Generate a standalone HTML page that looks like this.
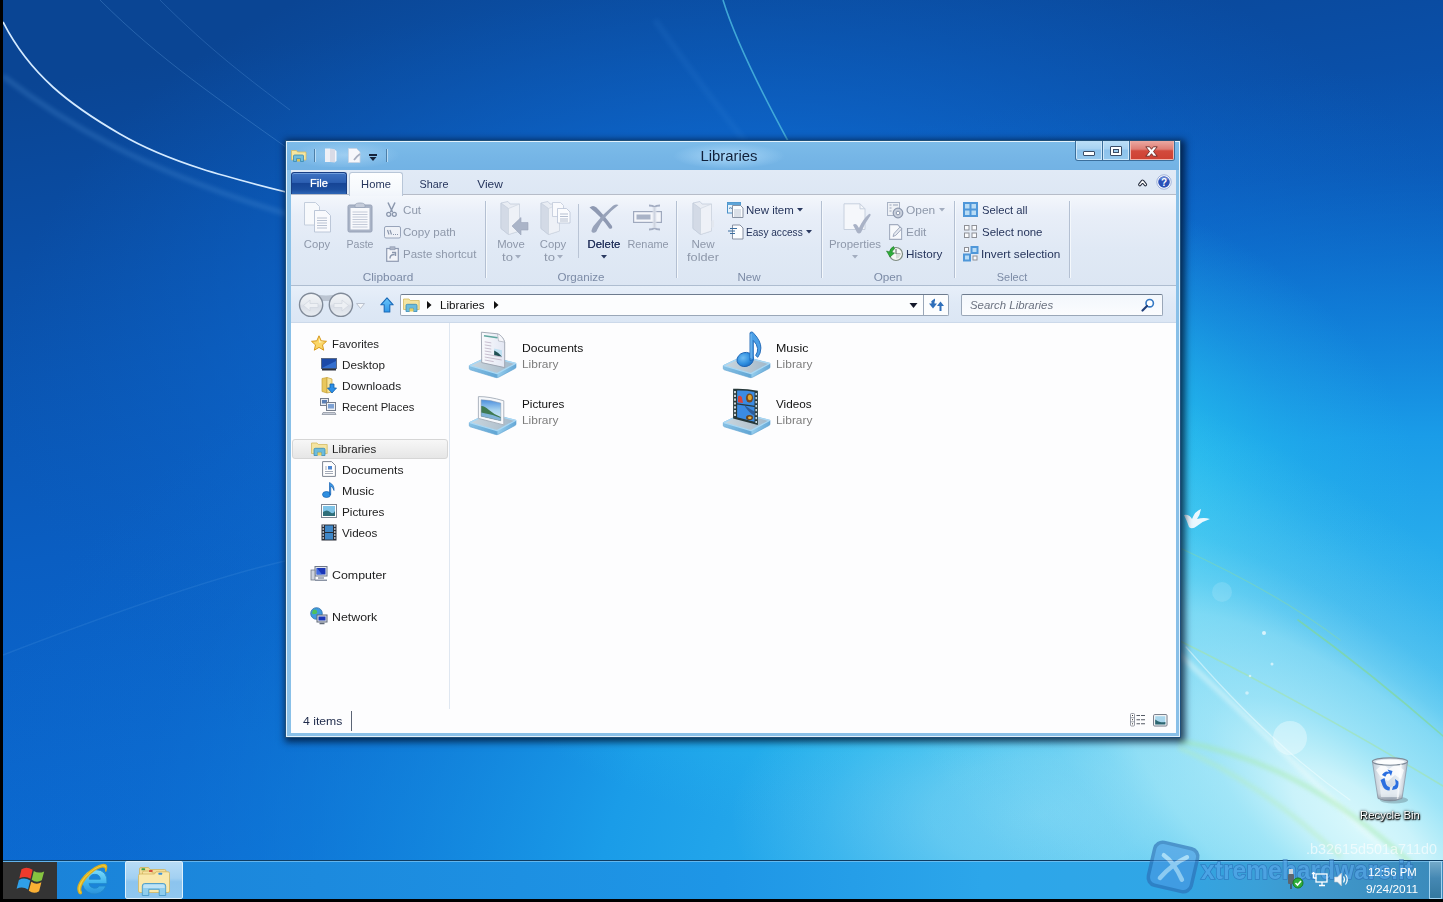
<!DOCTYPE html>
<html lang="en">
<head>
<meta charset="utf-8">
<title>Libraries</title>
<style>
*{box-sizing:border-box;margin:0;padding:0}
html,body{width:1443px;height:902px;overflow:hidden;background:#000}
body{position:relative;font-family:"Liberation Sans",sans-serif;font-size:12px;color:#1e1e1e}
.a{position:absolute}
svg{position:absolute;overflow:visible}
.t{position:absolute;white-space:nowrap;line-height:14.66px;font-size:11.6px;transform-origin:0 50%}
.c{text-align:center;transform-origin:50% 50%}
.dis{color:#8e98aa}
.en{color:#26355c}
.grp{color:#7c8ba6}
#desk{position:absolute;left:3px;top:0;width:1440px;height:899px;overflow:hidden;background:#0f5cb5}
</style>
</head>
<body>
<div id="desk">
<svg width="1440" height="899" viewBox="3 0 1440 899" style="left:0;top:0">
 <defs>
  <filter id="b2"><feGaussianBlur stdDeviation="2"/></filter>
  <filter id="b4"><feGaussianBlur stdDeviation="4"/></filter>
  <linearGradient id="wbase" gradientUnits="userSpaceOnUse" x1="560" y1="0" x2="700" y2="899">
   <stop offset="0" stop-color="#0a4594"/><stop offset=".15" stop-color="#0a4ca2"/><stop offset=".32" stop-color="#0a55b2"/>
   <stop offset=".52" stop-color="#0a5ec2"/><stop offset=".74" stop-color="#0b66cc"/><stop offset="1" stop-color="#0c6ed6"/>
  </linearGradient>
  <radialGradient id="wbroad" gradientUnits="userSpaceOnUse" cx="0" cy="0" r="1" gradientTransform="translate(1440 900) scale(1500 830)">
   <stop offset="0" stop-color="#4cc4f0"/><stop offset=".21" stop-color="#3cbaee"/><stop offset=".42" stop-color="#28acec"/>
   <stop offset=".56" stop-color="#1a9ce8"/><stop offset=".72" stop-color="#1286de" stop-opacity=".7"/><stop offset=".88" stop-color="#0e76d6" stop-opacity=".2"/><stop offset="1" stop-color="#0c6ed2" stop-opacity="0"/>
  </radialGradient>
  <radialGradient id="wcore" gradientUnits="userSpaceOnUse" cx="0" cy="0" r="1" gradientTransform="translate(1360 830) rotate(40) scale(700 270)">
   <stop offset="0" stop-color="#d8f8fc" stop-opacity="1"/><stop offset=".12" stop-color="#d0f5fb" stop-opacity=".96"/><stop offset=".18" stop-color="#c6f3fa" stop-opacity=".88"/><stop offset=".27" stop-color="#bcf1fa" stop-opacity=".74"/>
   <stop offset=".44" stop-color="#b8f0f9" stop-opacity=".58"/><stop offset=".52" stop-color="#b8f0f9" stop-opacity=".38"/><stop offset=".64" stop-color="#b4eef9" stop-opacity=".2"/><stop offset=".85" stop-color="#b0ecf8" stop-opacity=".06"/><stop offset="1" stop-color="#b0ecf8" stop-opacity="0"/>
  </radialGradient>
  <radialGradient id="wtr" gradientUnits="userSpaceOnUse" cx="0" cy="0" r="1" gradientTransform="translate(760 380) scale(760 480)">
   <stop offset="0" stop-color="#1278e0" stop-opacity="1"/><stop offset=".5" stop-color="#0e6cd4" stop-opacity=".7"/><stop offset=".8" stop-color="#0c64c8" stop-opacity=".3"/><stop offset="1" stop-color="#0c60c0" stop-opacity="0"/>
  </radialGradient>
  <radialGradient id="wg1" gradientUnits="userSpaceOnUse" cx="0" cy="0" r="1" gradientTransform="translate(900 500) scale(520 340)">
   <stop offset="0" stop-color="#38ccf2" stop-opacity="1"/><stop offset=".45" stop-color="#2cc8f0" stop-opacity=".85"/><stop offset=".6" stop-color="#28c8f0" stop-opacity=".6"/><stop offset=".8" stop-color="#28c0ee" stop-opacity=".25"/><stop offset="1" stop-color="#28b8ec" stop-opacity="0"/>
  </radialGradient>
  <radialGradient id="wg2" gradientUnits="userSpaceOnUse" cx="0" cy="0" r="1" gradientTransform="translate(1040 815) scale(310 160)">
   <stop offset="0" stop-color="#b8f0f9" stop-opacity=".46"/><stop offset=".35" stop-color="#b8f0f9" stop-opacity=".36"/><stop offset=".7" stop-color="#b4eef9" stop-opacity=".14"/><stop offset="1" stop-color="#b0ecf8" stop-opacity="0"/>
  </radialGradient>
 </defs>
 <rect x="3" y="0" width="1440" height="899" fill="url(#wbase)"/>
 <rect x="3" y="0" width="1440" height="899" fill="url(#wtr)"/>
 <rect x="3" y="0" width="1440" height="899" fill="url(#wbroad)"/>
 <rect x="3" y="0" width="1440" height="899" fill="url(#wg1)"/>
 <rect x="3" y="0" width="1440" height="899" fill="url(#wg2)"/>
 <rect x="3" y="0" width="1440" height="899" fill="url(#wcore)"/>
 <!-- faint wide arc top-left -->
 <path d="M3 76 C 60 120, 140 170, 290 215" fill="none" stroke="#5fa0e0" stroke-width="5" opacity=".25" filter="url(#b2)"/>
 <!-- white curve -->
 <path d="M3 22 C 30 75, 70 105, 120 134 S 230 178, 290 193" fill="none" stroke="#d4eaff" stroke-width="1.700"/>
 <!-- faint thin lines -->
 <path d="M100 0 C 160 60, 220 100, 290 150" fill="none" stroke="#6aa8e6" stroke-width="1" opacity=".3"/>
 <path d="M160 0 C 210 50, 250 80, 290 110" fill="none" stroke="#6aa8e6" stroke-width="1" opacity=".25"/>
 <!-- cyan thin curve top centre -->
 <path d="M723 0 C 734 36, 756 82, 788 141" fill="none" stroke="#4ab6de" stroke-width="1.600" opacity=".85"/>
 <path d="M655 20 C 690 70, 720 110, 745 141" fill="none" stroke="#3f8fe0" stroke-width="6" opacity=".12" filter="url(#b2)"/>
 <!-- light ray lower-left -->
 <path d="M3 655 C 120 610, 220 575, 290 560" fill="none" stroke="#4f98e0" stroke-width="1.500" opacity=".22"/>
 <!-- green swooshes bottom right -->
 <g fill="none" stroke-linecap="round">
  <path d="M1298 620 Q 1370 672, 1443 736" stroke="#86d888" stroke-width="1.600" opacity=".6"/>
  <path d="M1180 641 Q 1300 700, 1443 786" stroke="#a4e4a4" stroke-width="1.600" opacity=".55"/>
  <path d="M1180 655 C 1240 710, 1300 768, 1380 846" stroke="#effcfc" stroke-width="5" opacity=".5" filter="url(#b2)"/>
  <path d="M1186 647 C 1250 720, 1300 765, 1350 800" stroke="#f4ffff" stroke-width="1.200" opacity=".5"/>
  <path d="M1180 741 C 1260 756, 1330 790, 1410 862" stroke="#a6eaa6" stroke-width="4" opacity=".55" filter="url(#b2)"/>
  <path d="M1180 748 C 1240 774, 1295 814, 1340 856" stroke="#b6eeb2" stroke-width="4" opacity=".45" filter="url(#b2)"/>
  <path d="M1180 548 C 1250 580, 1300 610, 1340 640" stroke="#8fdc9a" stroke-width="1.300" opacity=".4"/>
 </g>
 <!-- bokeh -->
 <circle cx="1290" cy="738" r="17" fill="#f0fdff" opacity=".42"/>
 <circle cx="1222" cy="592" r="10" fill="#bfeefa" opacity=".22"/>
 <circle cx="1264" cy="633" r="2" fill="#fff" opacity=".7"/><circle cx="1272" cy="664" r="1.500" fill="#fff" opacity=".6"/><circle cx="1250" cy="676" r="1.300" fill="#fff" opacity=".6"/><circle cx="1247" cy="693" r="1.800" fill="#fff" opacity=".5"/>
 <!-- bird -->
 <path d="M1184 515 q5 -1 8 4 q3 -8 9 -10 q-1 6 -4 10 q7 -2 13 0 q-7 2 -13 7 q-5 4 -8 1 q-2 -6 -5 -12z" fill="#f4fbff" opacity=".95"/>
</svg>
</div>
<!-- window frame -->
<div class="a" style="left:285px;top:140px;width:896px;height:598px;box-shadow:2px 2px 7px 2px rgba(0,18,45,.78)"></div>
<div class="a" style="left:285px;top:140px;width:896px;height:598px;background:#89c0e8;border:1px solid #1f4f7a"></div>
<div class="a" style="left:286px;top:141px;width:894px;height:596px;border:1px solid #e3f2fc"></div>
<!-- title bar -->
<div class="a" style="left:287px;top:142px;width:892px;height:28px;background:linear-gradient(180deg,#7cbbe9 0%,#75b5e6 60%,#72b2e4 100%)"></div>
<div class="a" style="left:290px;top:143px;width:110px;height:24px;background:radial-gradient(ellipse 55px 14px at 50% 50%,rgba(190,225,250,.55),rgba(190,225,250,0))"></div>
<div class="a" style="left:669px;top:142px;width:120px;height:27px;background:radial-gradient(ellipse 56px 13px at 50% 52%,rgba(178,220,250,.85),rgba(170,215,248,.45) 55%,rgba(160,210,245,0) 100%)"></div>
<div class="t c" id="ttl" style="transform:scaleX(0.9908);left:629px;top:147px;width:200px;font-size:15px;line-height:18px;color:#10203a">Libraries</div>
<!-- quick access icons -->
<svg style="left:291px;top:148px" width="16" height="15" viewBox="0 0 16 15">
 <path d="M0.5 2.5h5l1 1.5h8.5v8h-14.5z" fill="#f6e6a0" stroke="#d6bd62" stroke-width=".8"/>
 <path d="M2.5 13.5v-5.5q0-1 1-1h8q1 0 1 1v5.5h-3v-3h-4v3z" fill="#72bedc" stroke="#3a8ab2" stroke-width=".8"/>
 <rect x="6" y="11" width="3" height="2.5" fill="#d9c45a"/>
</svg>
<div class="a" style="left:314px;top:149px;width:1px;height:13px;background:#4d7fa8"></div><div class="a" style="left:315px;top:149px;width:1px;height:13px;background:#b9dcf5"></div>
<svg style="left:324px;top:148px" width="14" height="15" viewBox="0 0 14 15"><path d="M1 0.5h5v13.5h-5z" fill="#eef0f6"/><path d="M6 0.5l5 .8v13.2l-5 -.5z" fill="#d9dbe6"/><path d="M11 2l1.5 1v10l-1.5 1z" fill="#f4f5fa"/></svg>
<svg style="left:348px;top:148px" width="13" height="15" viewBox="0 0 13 15"><path d="M.5 .5h8l3.5 3.5v10.500h-11.500z" fill="#f6f7fb" stroke="#c9d3e2" stroke-width=".8"/><path d="M6 12q3 -4 6 -6" stroke="#a8afc0" stroke-width="1.8" fill="none"/></svg>
<div class="a" style="left:369px;top:154px;width:8px;height:1.5px;background:#16243c"></div>
<svg style="left:369px;top:157px" width="8" height="5" viewBox="0 0 8 5"><path d="M.5 0h7l-3.500 4z" fill="#16243c"/></svg>
<div class="a" style="left:386px;top:149px;width:1px;height:13px;background:#4d7fa8"></div><div class="a" style="left:387px;top:149px;width:1px;height:13px;background:#b9dcf5"></div>
<!-- caption buttons -->
<div class="a" style="left:1075px;top:141px;width:100px;height:20px;background:#3b6f9c;border-radius:0 0 3px 3px"></div>
<div class="a" style="left:1076px;top:141px;width:26px;height:19px;border:1px solid #cfe8fa;border-top:none;background:linear-gradient(180deg,#bcdff7 0%,#a7d2f2 45%,#8dc2ec 50%,#94c8ee 100%);border-radius:0 0 0 2px"></div>
<div class="a" style="left:1103px;top:141px;width:26px;height:19px;border:1px solid #cfe8fa;border-top:none;background:linear-gradient(180deg,#bcdff7 0%,#a7d2f2 45%,#8dc2ec 50%,#94c8ee 100%)"></div>
<div class="a" style="left:1130px;top:141px;width:44px;height:19px;border:1px solid #f0b4ac;border-top:none;background:linear-gradient(180deg,#eaa9a2 0%,#df7d74 45%,#d24a3c 55%,#cf4233 100%);border-radius:0 0 2px 0"></div>
<div class="a" style="left:1083px;top:151px;width:12px;height:5px;background:#fff;border:1px solid #3a4c66;border-radius:1px"></div>
<div class="a" style="left:1110px;top:146px;width:12px;height:10px;background:#fff;border:1px solid #3a4c66;border-radius:1px"></div>
<div class="a" style="left:1113px;top:149px;width:6px;height:4px;background:#9fcdf0;border:1px solid #3a4c66"></div>
<svg style="left:1145px;top:145.500px" width="13" height="11" viewBox="0 0 13 11"><path d="M.8 .8h3.800l1.900 2.500 1.900 -2.500h3.800l-3.700 4.700 3.700 4.700h-3.800l-1.900 -2.500 -1.900 2.500h-3.800l3.700 -4.700z" fill="#fff" stroke="#6a2520" stroke-width=".9" stroke-linejoin="round"/></svg>
<!-- client bg -->
<div class="a" id="client" style="left:291px;top:170px;width:885px;height:563px;background:#fdfdfe"></div>
<!-- ribbon tab row -->
<div class="a" style="left:291px;top:170px;width:885px;height:25px;background:linear-gradient(180deg,#e1eaf6,#dde7f4)"></div>
<div class="a" style="left:291px;top:194px;width:885px;height:1px;background:#b6bcc8"></div>
<!-- ribbon body -->
<div class="a" style="left:291px;top:195px;width:885px;height:90px;background:linear-gradient(180deg,#f4f7fc 0%,#e8eef8 22%,#e0e9f5 60%,#dce6f3 100%)"></div>
<div class="a" style="left:291px;top:285px;width:885px;height:1px;background:#aebdd0"></div>
<!-- File tab -->
<div class="a" style="left:291px;top:172px;width:56px;height:22px;border:1px solid #1a3f84;border-bottom:none;border-radius:3px 3px 0 0;background:linear-gradient(180deg,#3f73c2 0%,#2c5fb2 45%,#164596 50%,#1c4f9f 80%,#2d66b6 100%);box-shadow:inset 0 1px 0 rgba(150,190,240,.6)"></div>
<div class="t c" style="transform:scaleX(0.9632);left:291px;top:175.500px;width:56px;color:#fff;text-shadow:0 0 1px #fff">File</div>
<!-- Home tab -->
<div class="a" style="left:349px;top:172px;width:54px;height:24px;border:1px solid #b8c6d8;border-bottom:none;border-radius:3px 3px 0 0;background:linear-gradient(180deg,#fdfeff 0%,#f6f9fd 70%,#f1f5fb 100%)"></div>
<div class="t c en" style="transform:scaleX(0.9632);left:349px;top:176.500px;width:54px">Home</div>
<div class="t c en" style="transform:scaleX(0.9309);left:408.500px;top:176.500px;width:50px">Share</div>
<div class="t c en" style="transform:scaleX(1.0312);left:464.600px;top:176.500px;width:50px">View</div>
<!-- collapse + help -->
<svg style="left:1137px;top:177px" width="12" height="10" viewBox="1137 177 12 10"><path d="M1139.800 184.600 L1142.600 181.200 L1145.400 184.600" fill="none" stroke="#252d3e" stroke-width="3.400" stroke-linejoin="round" stroke-linecap="round"/><path d="M1139.800 184.600 L1142.600 181.200 L1145.400 184.600" fill="none" stroke="#fff" stroke-width="1.400" stroke-linejoin="round" stroke-linecap="round"/></svg>
<svg style="left:1156px;top:174px" width="16" height="16" viewBox="0 0 16 16"><circle cx="8" cy="8" r="7.200" fill="#fff" stroke="#8aa0d0" stroke-width=".8"/><circle cx="8" cy="8" r="5.800" fill="#2a50b8"/><path d="M3 6a5.500 5.500 0 0 1 10 0q-5 -2 -10 0z" fill="#7f9be0" opacity=".7"/><text x="8" y="11.700" font-family="Liberation Sans, sans-serif" font-weight="bold" font-size="10" fill="#fff" text-anchor="middle">?</text></svg>

<!-- group separators -->
<div class="a" style="left:485px;top:201px;width:1px;height:77px;background:#b4c0d2"></div><div class="a" style="left:486px;top:201px;width:1px;height:77px;background:#f4f8fc"></div>
<div class="a" style="left:676px;top:201px;width:1px;height:77px;background:#b4c0d2"></div><div class="a" style="left:677px;top:201px;width:1px;height:77px;background:#f4f8fc"></div>
<div class="a" style="left:821px;top:201px;width:1px;height:77px;background:#b4c0d2"></div><div class="a" style="left:822px;top:201px;width:1px;height:77px;background:#f4f8fc"></div>
<div class="a" style="left:954px;top:201px;width:1px;height:77px;background:#b4c0d2"></div><div class="a" style="left:955px;top:201px;width:1px;height:77px;background:#f4f8fc"></div>
<div class="a" style="left:1069px;top:201px;width:1px;height:77px;background:#b4c0d2"></div><div class="a" style="left:1070px;top:201px;width:1px;height:77px;background:#f4f8fc"></div>
<div class="a" style="left:578px;top:204px;width:1px;height:54px;background:#b9c4d5"></div>

<!-- group labels -->
<div class="t c grp" style="transform:scaleX(1.0196);left:338.400px;top:270px;width:100px">Clipboard</div>
<div class="t c grp" style="transform:scaleX(1.0011);left:530.700px;top:270px;width:100px">Organize</div>
<div class="t c grp" style="transform:scaleX(0.9999);left:698.800px;top:270px;width:100px">New</div>
<div class="t c grp" style="transform:scaleX(1.0115);left:837.600px;top:270px;width:100px">Open</div>
<div class="t c grp" style="transform:scaleX(0.9431);left:962.100px;top:270px;width:100px">Select</div>

<!-- Clipboard group -->
<svg style="left:304px;top:202px" width="28" height="31" viewBox="0 0 28 31">
 <path d="M.5 .5h11l4 4v18.500h-15z" fill="#f7f9fc" stroke="#c4cedd"/>
 <path d="M10.500 8.500h11l5 5v16.500h-16z" fill="#f9fafd" stroke="#bcc7d8"/>
 <path d="M13 16h10M13 18.500h10M13 21h10M13 23.500h10M13 26h10" stroke="#b9c2d2" stroke-width="1"/>
</svg>
<div class="t c dis" style="transform:scaleX(0.9713);left:292.400px;top:237px;width:50px">Copy</div>
<svg style="left:347px;top:202px" width="26" height="31" viewBox="0 0 26 31">
 <rect x="1" y="3" width="24" height="27" rx="1.500" fill="#a9b3c6" stroke="#98a3b8"/>
 <rect x="3.500" y="6" width="19" height="21.500" fill="#f8f9fc"/>
 <path d="M8 3.500q0 -2.500 5 -2.500t5 2.500v2h-10z" fill="#c5ccda" stroke="#98a3b8" stroke-width=".8"/>
 <path d="M5.500 10h15M5.500 12.500h15M5.500 15h15M5.500 17.500h15M5.500 20h15M5.500 22.500h15M5.500 25h15" stroke="#c3cad8" stroke-width="1"/>
</svg>
<div class="t c dis" style="transform:scaleX(0.9104);left:334.600px;top:237px;width:50px">Paste</div>
<!-- cut -->
<svg style="left:386px;top:202px" width="11" height="16" viewBox="0 0 11 16"><path d="M2 .5l4.500 9.500M9 .5l-4.500 9.500" stroke="#8b97ad" stroke-width="1.500" fill="none"/><circle cx="2.700" cy="12.300" r="2" fill="none" stroke="#8b97ad" stroke-width="1.300"/><circle cx="8.300" cy="12.300" r="2" fill="none" stroke="#8b97ad" stroke-width="1.300"/></svg>
<div class="t dis" style="transform:scaleX(1.0029);left:403px;top:203px">Cut</div>
<svg style="left:384px;top:226px" width="17" height="13" viewBox="0 0 17 13"><rect x=".5" y=".5" width="16" height="11.500" rx="1.500" fill="#eef1f7" stroke="#98a4ba"/><path d="M3.500 4l1.500 4.500M6 4l1.500 4.500" stroke="#8b97ad" stroke-width="1.200"/><path d="M9 8.500h1M11 8.500h1M13 8.500h1" stroke="#8b97ad" stroke-width="1.200"/></svg>
<div class="t dis" style="transform:scaleX(0.9989);left:403px;top:225px">Copy path</div>
<svg style="left:386px;top:246px" width="13" height="16" viewBox="0 0 13 16"><rect x=".7" y="2.500" width="11.600" height="12.800" fill="#f3f5fa" stroke="#8f9bb2" stroke-width="1.200"/><rect x="4" y=".8" width="5" height="3" fill="#aeb7c8" stroke="#8f9bb2" stroke-width=".7"/><path d="M4 12.500q0 -4 4.500 -4M6 6.500h3.500v3.500" stroke="#8b97ad" stroke-width="1.400" fill="none"/></svg>
<div class="t dis" style="transform:scaleX(0.9904);left:403px;top:247px">Paste shortcut</div>

<!-- Organize group -->
<svg style="left:500px;top:201px" width="29" height="34" viewBox="0 0 29 34">
 <path d="M1 2l7 -1.500 2 2.500h9.500v27l-11 3.500l-7.500 -6z" fill="#e9edf4" stroke="#c3ccdb" stroke-width=".8"/>
 <path d="M1 2l7.500 5.500v26l-7.500 -6z" fill="#d3dae6" stroke="#c0c9d8" stroke-width=".6"/>
 <path d="M8.500 7.500l11 -4.500v27l-11 3.500z" fill="#eef1f7" stroke="#c9d1de" stroke-width=".6"/>
 <path d="M12 25l9 -8.500v5h7v7.500h-7v5z" fill="#aab4c8" stroke="#9aa5bb" stroke-width=".6"/>
</svg>
<div class="t c dis" style="transform:scaleX(0.9767);left:486.200px;top:237px;width:50px">Move</div>
<div class="t dis" style="transform:scaleX(1.1270);left:502px;top:250px">to</div>
<svg style="left:515px;top:255px" width="6" height="4" viewBox="0 0 6 4"><path d="M0 0h6l-3 3.500z" fill="#a3adbf"/></svg>
<svg style="left:540px;top:201px" width="31" height="34" viewBox="0 0 31 34">
 <path d="M1 2l7 -1.500 2 2.500h9.500v27l-11 3.500l-7.500 -6z" fill="#e9edf4" stroke="#c3ccdb" stroke-width=".8"/>
 <path d="M1 2l7.500 5.500v26l-7.500 -6z" fill="#d3dae6" stroke="#c0c9d8" stroke-width=".6"/>
 <path d="M8.500 7.500l11 -4.500v27l-11 3.500z" fill="#eef1f7" stroke="#c9d1de" stroke-width=".6"/>
 <path d="M12.500 1.500h8l3 3v11h-11z" fill="#f9fafd" stroke="#c0c9d9" stroke-width=".8"/>
 <path d="M17.500 7.500h9l3.500 3.500v11h-12.500z" fill="#fbfcfe" stroke="#b9c3d5" stroke-width=".8"/>
 <path d="M20 13h8M20 15.500h8M20 18h8M20 20h8" stroke="#b5bfd0" stroke-width="1"/>
</svg>
<div class="t c dis" style="transform:scaleX(0.9750);left:528.400px;top:237px;width:50px">Copy</div>
<div class="t dis" style="transform:scaleX(1.1270);left:543.800px;top:250px">to</div>
<svg style="left:557px;top:255px" width="6" height="4" viewBox="0 0 6 4"><path d="M0 0h6l-3 3.500z" fill="#a3adbf"/></svg>
<!-- delete -->
<svg style="left:589px;top:204px" width="30" height="29" viewBox="0 0 30 29">
 <path d="M.5 3.500q3.500 -3 7 0q7 7 15.500 18.500q1 3.500 -2.800 2.500q-8 -12 -19.700 -21z" fill="#8e99b2"/>
 <path d="M29.500 1q-2 -1.500 -5.500 .8q-11 9 -19.500 20.200q-3.500 5.500 -1 6.500q3.500 1 4.800 -3q6 -13 21.200 -24.500z" fill="#98a3ba"/>
</svg>
<div class="t c" style="transform:scaleX(0.9786);left:578.800px;top:237px;width:50px;color:#25345e;text-shadow:0 0 .6px #25345e">Delete</div>
<svg style="left:601px;top:255px" width="6" height="4" viewBox="0 0 6 4"><path d="M0 0h6l-3 3.500z" fill="#2a3960"/></svg>
<!-- rename -->
<svg style="left:633px;top:204px" width="30" height="27" viewBox="0 0 30 27">
 <rect x=".6" y="7.600" width="27.800" height="10.800" fill="#f4f6fa" stroke="#9fa9be" stroke-width="1.200"/>
 <rect x="3.500" y="10.500" width="14" height="5" fill="#a9b3c7"/>
 <path d="M16 1.500q4 0 5.500 1.500q1.500 -1.500 5.500 -1.500M16 25.500q4 0 5.500 -1.500q1.500 1.500 5.500 1.500M21.500 3v21" fill="none" stroke="#a3adc2" stroke-width="1.800"/>
 <rect x="19.500" y="3" width="4" height="21" fill="#dfe4ed" opacity=".7"/>
</svg>
<div class="t c dis" style="transform:scaleX(0.9400);left:622.500px;top:237px;width:50px">Rename</div>

<!-- New group -->
<svg style="left:692px;top:201px" width="23" height="34" viewBox="0 0 23 34">
 <path d="M1 2l7 -1.500 2 2.500h9.500v27l-11 3.500l-7.500 -6z" fill="#e9edf4" stroke="#c3ccdb" stroke-width=".8"/>
 <path d="M1 2l7.500 5.500v26l-7.500 -6z" fill="#d3dae6" stroke="#c0c9d8" stroke-width=".6"/>
 <path d="M8.500 7.500l11 -4.500v27l-11 3.500z" fill="#eef1f7" stroke="#c9d1de" stroke-width=".6"/>
 <path d="M19.500 20l2.500 -1v7l-2.500 1z" fill="#e3e8f0"/>
</svg>
<div class="t c dis" style="transform:scaleX(0.9999);left:677.600px;top:237px;width:50px">New</div>
<div class="t c dis" style="transform:scaleX(1.0960);left:677.500px;top:250px;width:50px">folder</div>
<svg style="left:727px;top:202px" width="17" height="16" viewBox="0 0 17 16">
 <rect x=".5" y=".5" width="13" height="10.500" fill="#e8f3fb" stroke="#4a90c8"/>
 <rect x=".5" y=".5" width="13" height="2.500" fill="#5fa5d8"/>
 <path d="M5.500 3.500h8l2.500 2.500v9.500h-10.500z" fill="#fcfdff" stroke="#7d8798" stroke-width=".9"/>
 <path d="M7 8h7M7 10h7M7 12h7M7 14h7" stroke="#b3bccb" stroke-width=".9"/>
 <path d="M2 6.500q1.500 -1.500 3 0" stroke="#4a7fb0" fill="none"/>
</svg>
<div class="t en" style="transform:scaleX(0.9891);left:746px;top:203px">New item</div>
<svg style="left:797px;top:208px" width="6" height="4" viewBox="0 0 6 4"><path d="M0 0h6l-3 3.500z" fill="#2a3960"/></svg>
<svg style="left:727px;top:224px" width="17" height="16" viewBox="0 0 17 16">
 <path d="M5.500 1h7.500l3 3v11h-10.500z" fill="#fcfdff" stroke="#7d8798" stroke-width=".9"/>
 <path d="M3 4.500h7M1 7h7M3 9.500h5" stroke="#3b6ea0" stroke-width="1.100"/>
</svg>
<div class="t en" style="transform:scaleX(0.8711);left:746px;top:225px">Easy access</div>
<svg style="left:806px;top:230px" width="6" height="4" viewBox="0 0 6 4"><path d="M0 0h6l-3 3.500z" fill="#2a3960"/></svg>

<!-- Open group -->
<svg style="left:843px;top:203px" width="28" height="31" viewBox="0 0 28 31">
 <path d="M1 .8h16l5 5v20.700h-21z" fill="#f5f7fb" stroke="#c7d0de"/>
 <path d="M17 .8v5h5" fill="none" stroke="#c7d0de"/>
 <path d="M10 22q2 -2 4 0l2 3q4 -9 10 -14q2 -1 1.500 1.500q-6 8 -9.500 17q-2 2 -4 0z" fill="#a9b2c6"/>
</svg>
<div class="t c dis" style="transform:scaleX(0.9878);left:820px;top:237px;width:70px">Properties</div>
<svg style="left:852px;top:255px" width="6" height="4" viewBox="0 0 6 4"><path d="M0 0h6l-3 3.500z" fill="#a3adbf"/></svg>
<svg style="left:887px;top:202px" width="17" height="17" viewBox="0 0 17 17">
 <rect x=".5" y=".5" width="12" height="13" fill="#eef1f6" stroke="#a9b3c5"/>
 <path d="M2.500 3h2M2.500 6h2M2.500 9h2M6 3h5" stroke="#9aa5b9" stroke-width="1.200"/>
 <circle cx="11" cy="11" r="4.800" fill="#c9d0dd" stroke="#8d98ae" stroke-width="1.200"/><circle cx="11" cy="11" r="1.800" fill="#fff" stroke="#8d98ae"/>
</svg>
<div class="t dis" style="transform:scaleX(1.0291);left:906px;top:203px">Open</div>
<svg style="left:939px;top:208px" width="6" height="4" viewBox="0 0 6 4"><path d="M0 0h6l-3 3.500z" fill="#a3adbf"/></svg>
<svg style="left:889px;top:224px" width="14" height="16" viewBox="0 0 14 16">
 <path d="M.6 .6h8l4 4v10.800h-12z" fill="#f7f9fc" stroke="#a3adc0" stroke-width="1.100"/>
 <path d="M4 12.500l1 -3l6 -6.500l1.800 1.800l-6 6.500z" fill="#e6eaf1" stroke="#97a2b7" stroke-width=".9"/>
</svg>
<div class="t dis" style="transform:scaleX(1.0208);left:906px;top:225px">Edit</div>
<svg style="left:886px;top:245px" width="18" height="17" viewBox="0 0 18 17">
 <circle cx="10" cy="9" r="6.500" fill="#f6f7f5" stroke="#7d8a80" stroke-width="1.200"/>
 <path d="M10 9v-5M10 9h4.500" stroke="#6a746e" stroke-width="1.100"/>
 <path d="M10 9l4.500 0a4.500 4.500 0 0 1 -4.500 4.500z" fill="#d8dcd9"/>
 <path d="M7.500 1.500a7.500 7.500 0 0 0 -4 5.500l-3 -1l3.500 6l4.500 -4l-2.600 -.5a5 5 0 0 1 2.600 -3.500z" fill="#2fae3a" stroke="#1d7a25" stroke-width=".6"/>
</svg>
<div class="t en" style="transform:scaleX(1.0089);left:906px;top:247px">History</div>

<!-- Select group -->
<svg style="left:963px;top:202px" width="16" height="16" viewBox="0 0 16 16">
 <rect width="15" height="15" fill="#4f97d9"/>
 <rect x="2" y="2" width="4.500" height="4.500" fill="#b9dcf5"/><rect x="8.500" y="2" width="4.500" height="4.500" fill="#b9dcf5"/><rect x="2" y="8.500" width="4.500" height="4.500" fill="#b9dcf5"/><rect x="8.500" y="8.500" width="4.500" height="4.500" fill="#b9dcf5"/>
</svg>
<div class="t en" style="transform:scaleX(0.9671);left:982px;top:203px">Select all</div>
<svg style="left:964px;top:225px" width="14" height="14" viewBox="0 0 14 14" fill="#fafbfd" stroke="#8d8f96" stroke-width="1"><rect x=".5" y=".5" width="4.500" height="4.500"/><rect x="8" y=".5" width="4.500" height="4.500"/><rect x=".5" y="8" width="4.500" height="4.500"/><rect x="8" y="8" width="4.500" height="4.500"/></svg>
<div class="t en" style="transform:scaleX(0.9878);left:982px;top:225px">Select none</div>
<svg style="left:963px;top:246px" width="16" height="16" viewBox="0 0 16 16">
 <rect x="1.500" y="1.500" width="4" height="4" fill="#fafbfd" stroke="#8d8f96"/>
 <rect x="7.500" y="0" width="8" height="8" fill="#4f97d9"/><rect x="9.500" y="2" width="4" height="4" fill="#b9dcf5"/>
 <rect x="0" y="7.500" width="8" height="8" fill="#4f97d9"/><rect x="2" y="9.500" width="4" height="4" fill="#b9dcf5"/>
 <rect x="10" y="10" width="4" height="4" fill="#fafbfd" stroke="#8d8f96"/>
</svg>
<div class="t en" style="transform:scaleX(1.0169);left:981px;top:247px">Invert selection</div>
<!-- nav bar -->
<div class="a" style="left:291px;top:286px;width:885px;height:37px;background:linear-gradient(180deg,#e7eff9 0%,#dfe9f6 50%,#dbe6f4 100%)"></div>
<div class="a" style="left:291px;top:322px;width:885px;height:1px;background:#ccd9ea"></div>
<!-- back/forward -->
<svg style="left:297px;top:291px" width="70" height="28" viewBox="0 0 70 28">
 <defs><linearGradient id="bg1" x1="0" y1="0" x2="0" y2="1"><stop offset="0" stop-color="#f3f5f8"/><stop offset=".45" stop-color="#e6eaef"/><stop offset=".55" stop-color="#d9dee6"/><stop offset="1" stop-color="#e9edf2"/></linearGradient></defs>
 <path d="M14 2 Q 29 7 44 2 L44 11 Q29 9 14 11z" fill="#b4bdca" opacity=".85"/>
 <circle cx="14.100" cy="13.800" r="11.600" fill="url(#bg1)" stroke="#808a98" stroke-width="1.400"/>
 <circle cx="43.900" cy="13.800" r="11.600" fill="url(#bg1)" stroke="#808a98" stroke-width="1.400"/>
 <path d="M6.500 14.500l6.500 -5.500v3.500h8v4h-8v3.500z" fill="#edf0f4" stroke="#d2d7df" stroke-width=".8"/>
 <path d="M51.500 14.500l-6.500 -5.500v3.500h-8v4h8v3.500z" fill="#edf0f4" stroke="#d2d7df" stroke-width=".8"/>
 <path d="M59.500 12.500h8l-4 5z" fill="#f5f7fa" stroke="#b4bcc9" stroke-width=".9"/>
</svg>
<!-- up arrow -->
<svg style="left:380px;top:297px" width="14" height="16" viewBox="0 0 14 16"><defs><linearGradient id="upg" x1="0" y1="0" x2="0" y2="1"><stop offset="0" stop-color="#6cc6fa"/><stop offset="1" stop-color="#2f98ea"/></linearGradient></defs><path d="M7 .8l6.200 7h-3.400v7.200h-5.600v-7.200h-3.400z" fill="url(#upg)" stroke="#1a6ab8" stroke-width="1.100" stroke-linejoin="round"/></svg>
<!-- address bar -->
<div class="a" style="left:400px;top:294px;width:549px;height:22px;background:#fcfdfe;border:1px solid #9aa7b8;border-top-color:#6d7b8e;border-radius:2px"></div>
<div class="a" style="left:923px;top:295px;width:1px;height:20px;background:#9aa7b8"></div>
<svg style="left:403px;top:297px" width="17" height="16" viewBox="0 0 17 16">
 <path d="M.5 2h5.500l1.200 1.500h9v9h-15.700z" fill="#f5e4a0" stroke="#d4bb62" stroke-width=".8"/>
 <path d="M3 14.500v-6q0 -1.200 1.200 -1.200h8.600q1.200 0 1.200 1.200v6h-3.500v-3.200h-4v3.200z" fill="#6cbcdc" stroke="#3a8cb6" stroke-width=".8"/>
 <rect x="6.500" y="11.500" width="4" height="3" fill="#e5cf62"/>
</svg>
<svg style="left:427px;top:301px" width="5" height="8" viewBox="0 0 5 8"><path d="M0 0l4.500 4l-4.500 4z" fill="#111"/></svg>
<div class="t" style="transform:scaleX(1.0030);left:440px;top:298px;color:#111">Libraries</div>
<svg style="left:494px;top:301px" width="5" height="8" viewBox="0 0 5 8"><path d="M0 0l4.500 4l-4.500 4z" fill="#111"/></svg>
<svg style="left:909px;top:303px" width="9" height="5" viewBox="0 0 9 5"><path d="M.5 0h8l-4 5z" fill="#14182a"/></svg>
<svg style="left:929px;top:298px" width="15" height="14" viewBox="0 0 15 14">
 <path d="M5.500 1v4.500h2.500l-4 5l-4 -5h2.500v-2z" fill="#2f6fba" transform="translate(0,0) rotate(0)"/>
 <path d="M10.500 13v-5h-2.500l3.500 -4.500l3.500 4.500h-2.500v5z" fill="#2f6fba"/>
 <path d="M2 3.500l4 -3v2.200l-1.500 1.800z" fill="#2f6fba"/>
</svg>
<!-- search -->
<div class="a" style="left:961px;top:294px;width:202px;height:22px;background:linear-gradient(180deg,#f3f7fc,#fbfcfe);border:1px solid #9aa7b8;border-top-color:#6d7b8e;border-radius:2px"></div>
<div class="t" style="transform:scaleX(0.9843);left:970px;top:298px;color:#6b7280;font-style:italic">Search Libraries</div>
<svg style="left:1141px;top:298px" width="14" height="14" viewBox="0 0 14 14"><circle cx="8.700" cy="5.200" r="3.700" fill="#fff" stroke="#3579c4" stroke-width="1.600"/><path d="M6 8l-4.500 4.500" stroke="#1f3e78" stroke-width="2.200" stroke-linecap="round"/></svg>
<!-- content -->
<div class="a" style="left:449px;top:323px;width:1px;height:386px;background:#dfe7f1"></div>
<!-- sidebar -->
<div class="a" style="left:292px;top:439px;width:156px;height:20px;border:1px solid #d6d6d6;border-radius:3px;background:linear-gradient(180deg,#f7f7f7,#e6e6e6)"></div>
<div class="t" style="transform:scaleX(0.9856);left:332px;top:336.500px">Favorites</div>
<div class="t" style="transform:scaleX(1.0087);left:342px;top:357.500px">Desktop</div>
<div class="t" style="transform:scaleX(1.0321);left:342px;top:378.500px">Downloads</div>
<div class="t" style="transform:scaleX(0.9670);left:342px;top:399.500px">Recent Places</div>
<div class="t" style="transform:scaleX(0.9940);left:332px;top:442px">Libraries</div>
<div class="t" style="transform:scaleX(1.0505);left:342px;top:463px">Documents</div>
<div class="t" style="transform:scaleX(1.0667);left:342px;top:483.500px">Music</div>
<div class="t" style="transform:scaleX(1.0145);left:342px;top:504.500px">Pictures</div>
<div class="t" style="transform:scaleX(1.0043);left:342px;top:525.500px">Videos</div>
<div class="t" style="transform:scaleX(1.0686);left:332px;top:568px">Computer</div>
<div class="t" style="transform:scaleX(1.0651);left:332px;top:610px">Network</div>
<!-- sidebar icons -->
<svg style="left:311px;top:335px" width="16" height="16" viewBox="0 0 16 16"><path d="M8 .8l2.200 5 5.300 .5 -4 3.600 1.200 5.300 -4.700 -2.800 -4.700 2.800 1.200 -5.300 -4 -3.600 5.300 -.5z" fill="#fbd768" stroke="#d89a1e" stroke-width="1"/><path d="M8 3l1.400 3.400 3.400 .3 -4.800 1z" fill="#fff3c0"/></svg>
<svg style="left:321px;top:357px" width="16" height="15" viewBox="0 0 16 15"><rect x=".5" y="1.500" width="15" height="10" fill="#1c4aa8" stroke="#5a6a86"/><path d="M1 11l14 -7v7.500h-14z" fill="#3f7fe0" opacity=".7"/><rect x="1" y="11.500" width="14" height="2" fill="#2a2f3a"/></svg>
<svg style="left:321px;top:377px" width="17" height="17" viewBox="0 0 17 17"><path d="M1 1.500l5 -1v15.500l-5 -1.500z" fill="#e9c75c" stroke="#c7a23a" stroke-width=".7"/><path d="M6 .5l5 1.500v13l-5 1z" fill="#f6e39a" stroke="#c7a23a" stroke-width=".7"/><path d="M9 7h4v4h2.500l-4.500 5l-4.500 -5h2.500z" fill="#2b8fe8" stroke="#155fa8" stroke-width=".8"/></svg>
<svg style="left:320px;top:398px" width="17" height="17" viewBox="0 0 17 17"><rect x=".5" y=".5" width="8" height="7" fill="#e7eaf0" stroke="#767e8c"/><rect x="2" y="2" width="5" height="3.500" fill="#5b7fb4"/><rect x="6.500" y="4.500" width="9" height="8" fill="#eef0f4" stroke="#767e8c"/><rect x="8" y="6" width="6" height="4.500" fill="#7ea2d4"/><path d="M3 14.500h12l1 2h-14z" fill="#c9ced8" stroke="#848c9a" stroke-width=".7"/></svg>
<svg style="left:311px;top:441px" width="17" height="16" viewBox="0 0 17 16"><path d="M.5 2h5.500l1.200 1.500h9v9h-15.700z" fill="#f5e4a0" stroke="#d4bb62" stroke-width=".8"/><path d="M3 14.500v-6q0 -1.200 1.200 -1.200h8.600q1.200 0 1.200 1.200v6h-3.500v-3.200h-4v3.200z" fill="#6cbcdc" stroke="#3a8cb6" stroke-width=".8"/><rect x="6.500" y="11.500" width="4" height="3" fill="#e5cf62"/></svg>
<svg style="left:322px;top:461px" width="14" height="16" viewBox="0 0 14 16"><path d="M.6 .6h9l3.800 3.800v11h-12.800z" fill="#fff" stroke="#7d8592" stroke-width="1"/><rect x="6" y="5" width="4" height="3.500" fill="#4f86d0"/><path d="M3 6h2M3 8h2M3 10.500h8M3 12.500h8" stroke="#9aa2b0" stroke-width=".9"/></svg>
<svg style="left:322px;top:482px" width="14" height="16" viewBox="0 0 14 16"><ellipse cx="4.500" cy="12.500" rx="4" ry="3" fill="#2f8fe0" stroke="#1660b0" stroke-width=".7"/><path d="M7.500 12.500v-12q5 2.500 4.500 8q-1 -3.500 -3.300 -4.500v8.500z" fill="#3c98e6" stroke="#1660b0" stroke-width=".7"/></svg>
<svg style="left:321px;top:504px" width="16" height="14" viewBox="0 0 16 14"><rect x=".5" y=".5" width="15" height="13" fill="#fff" stroke="#7d8592"/><rect x="2" y="2" width="12" height="10" fill="#7fc4e8"/><path d="M2 12v-4q4 -3 7 0t5 -1v5z" fill="#2f6f7a"/></svg>
<svg style="left:321px;top:524px" width="16" height="17" viewBox="0 0 16 17"><rect x=".5" y=".5" width="15" height="16" fill="#2b2f38"/><rect x="4" y="1.500" width="8" height="6.500" fill="#3f87c8"/><rect x="4" y="9" width="8" height="6.500" fill="#3f87c8"/><path d="M1.500 2h1.500M1.500 5h1.500M1.500 8h1.500M1.500 11h1.500M1.500 14h1.500M13 2h1.500M13 5h1.500M13 8h1.500M13 11h1.500M13 14h1.500" stroke="#d8dce4" stroke-width="1.500"/></svg>
<svg style="left:310px;top:566px" width="18" height="16" viewBox="0 0 18 16"><rect x="5" y=".5" width="12" height="9.500" fill="#e3e7ee" stroke="#6f7888"/><rect x="6.500" y="2" width="9" height="6.500" fill="#1a36b8"/><path d="M7 2l5 6.500h-5.500z" fill="#4b7bec" opacity=".8"/><rect x="8" y="11" width="6" height="2" fill="#aab1bf"/><rect x="1" y="4" width="4" height="10" fill="#cfd4de" stroke="#6f7888" stroke-width=".8"/><path d="M5 13.500h12v1.500h-12z" fill="#8a93a4"/></svg>
<svg style="left:310px;top:607px" width="18" height="18" viewBox="0 0 18 18"><circle cx="6.500" cy="6.500" r="5.800" fill="#3f9be0" stroke="#2a6aa8" stroke-width=".8"/><path d="M3 3q3 -1.500 4 1t-2 3t-3 -1zM8 8q3 -1 3 1.500t-2.500 1.500z" fill="#4fc05a"/><rect x="7" y="8" width="10" height="7" fill="#dfe3ea" stroke="#5f6878"/><rect x="8.500" y="9.500" width="7" height="4" fill="#1a36b8"/><path d="M9.500 16.500h5" stroke="#5f6878" stroke-width="1.500"/></svg>

<!-- library items -->
<div class="t" style="transform:scaleX(1.0454);left:522px;top:340.500px;color:#111">Documents</div>
<div class="t" style="transform:scaleX(1.0267);left:522px;top:356.500px;color:#7d7d7d">Library</div>
<div class="t" style="transform:scaleX(1.0098);left:522px;top:396.500px;color:#111">Pictures</div>
<div class="t" style="transform:scaleX(1.0267);left:522px;top:412.500px;color:#7d7d7d">Library</div>
<div class="t" style="transform:scaleX(1.0700);left:776px;top:340.500px;color:#111">Music</div>
<div class="t" style="transform:scaleX(1.0267);left:776px;top:356.500px;color:#7d7d7d">Library</div>
<div class="t" style="transform:scaleX(1.0099);left:776px;top:396.500px;color:#111">Videos</div>
<div class="t" style="transform:scaleX(1.0267);left:776px;top:412.500px;color:#7d7d7d">Library</div>

<svg width="0" height="0" style="left:0;top:0"><defs>
 <linearGradient id="plt" x1="0" y1="0" x2="1" y2="0"><stop offset="0" stop-color="#c9d6df"/><stop offset=".55" stop-color="#b7c6d1"/><stop offset="1" stop-color="#9fb7ca"/></linearGradient>
 <linearGradient id="pls" x1="0" y1="0" x2="1" y2="0"><stop offset="0" stop-color="#86c0e4"/><stop offset=".58" stop-color="#62a6d4"/><stop offset=".62" stop-color="#92cbec"/><stop offset="1" stop-color="#66a8d6"/></linearGradient>
 <g id="plate">
  <path d="M.3 34.600 L20 25.300 L47 32.400 L47 36 Q47 37 46 37.500 L29.500 46.300 Q28 47 26.500 46.500 L1.300 38.800 Q.3 38.400 .3 37.400z" fill="url(#pls)" stroke="#5a9fd0" stroke-width=".6"/>
  <path d="M.8 34.600 L20 25.600 L46.600 32.500 L28 42.600z" fill="url(#plt)" stroke="#a9d8f4" stroke-width="1.300" stroke-linejoin="round"/>
 </g>
 <linearGradient id="pg" x1="0" y1="0" x2="1" y2="0"><stop offset="0" stop-color="#f9fafd"/><stop offset="1" stop-color="#e3e7f3"/></linearGradient>
 <linearGradient id="sky" x1="0" y1="0" x2="0" y2="1"><stop offset="0" stop-color="#4a8ede"/><stop offset=".5" stop-color="#a9d4f0"/><stop offset="1" stop-color="#d8eef8"/></linearGradient>
 <radialGradient id="nh" cx=".4" cy=".35" r=".7"><stop offset="0" stop-color="#6fbcf2"/><stop offset=".6" stop-color="#2f8fe0"/><stop offset="1" stop-color="#1a6cc0"/></radialGradient>
</defs></svg>
<!-- documents -->
<svg style="left:469px;top:331px" width="48" height="48" viewBox="0 0 48 48">
 <use href="#plate"/>
 <path d="M12.400 1.200 L28.500 2.800 Q33.500 4.500 35.700 11.100 L35.700 36.600 L12.700 31.600z" fill="url(#pg)" stroke="#9aa2ae" stroke-width=".9" stroke-linejoin="round"/>
 <path d="M28.500 2.800 L29.500 10 L35.700 11.100 Q33.500 4.500 28.500 2.800z" fill="#f6f7fb" stroke="#a7aeb9" stroke-width=".7"/>
 <path d="M15 4.700 L28.500 6.800" stroke="#5fa69e" stroke-width="1.600"/>
 <path d="M25.200 17.600 L33 19.200 L33 25.800 L25.200 24.200z" fill="#bfe0f2"/>
 <path d="M25.200 19.500 Q29 21 33 25.800 L25.200 24.200z" fill="#1f4f52"/>
 <path d="M15.700 10.800l6.600 1.100M15.700 13.900l6.600 1.100M15.700 17l6.600 1.100M15.700 20l6.600 1.100M15.700 23l17 3M15.700 26l17 3M15.700 29l9 1.600" stroke="#b7a9bd" stroke-width=".9" opacity=".8"/>
</svg>
<!-- pictures -->
<svg style="left:469px;top:387.500px" width="48" height="48" viewBox="0 0 48 48">
 <use href="#plate"/>
 <path d="M9.400 8.600 Q20 8.400 34.800 12.800 L34.800 36.900 L9.400 30.400z" fill="#f7f9fc" stroke="#a4adb8" stroke-width=".9" stroke-linejoin="round"/>
 <path d="M12.100 11.700 Q21 11.700 31.800 15.100 L31.800 32.800 L12.100 28.200z" fill="url(#sky)"/>
 <path d="M12.100 18 Q15 17.500 20 22 T31.800 29 L31.800 32.800 L12.100 28.200z" fill="#3f7a52"/>
 <path d="M12.100 24.500 Q22 26 31.800 30 L31.800 32.800 L12.100 28.200z" fill="#7fb3d8"/>
 <path d="M12.100 11.700 Q21 11.700 31.800 15.100 L31.800 32.800 L12.100 28.200z" fill="none" stroke="#8d98a6" stroke-width=".5"/>
</svg>
<!-- music -->
<svg style="left:723px;top:331px" width="48" height="48" viewBox="0 0 48 48">
 <use href="#plate"/>
 <ellipse cx="22.200" cy="28.500" rx="8.300" ry="7" fill="url(#nh)" stroke="#1c64b4" stroke-width=".9" transform="rotate(-15 22.200 28.500)"/>
 <path d="M27 29.500 V2.200 Q27 1 28.600 1 Q30 1 30.600 2.200 Q38 10 37.900 17 Q37.800 22.500 34.800 26.300 L32.600 24.400 Q35 21 34.600 17.500 Q34 13 30.300 9.500 V28.500z" fill="#4b9fe6" stroke="#1c64b4" stroke-width=".9" stroke-linejoin="round"/>
 <path d="M28 3 V27" stroke="#8cc8f4" stroke-width="1" opacity=".8"/>
</svg>
<!-- videos -->
<svg style="left:723px;top:387.500px" width="48" height="48" viewBox="0 0 48 48">
 <use href="#plate"/>
 <path d="M10.100 .8 Q22 .2 34.900 2.700 L34.900 36.900 L10.100 30.400z" fill="#27383a"/>
 <path d="M14.100 2.600 Q23 2.300 31.500 4 L31.500 17.700 L14.100 15.200z" fill="#3b8be2"/>
 <path d="M14.100 16.400 L31.500 19 L31.500 33.800 L14.100 29.300z" fill="#3b8be2"/>
 <path d="M15 8.500 q2.500 -2 4 1 l1 5.500 l-5 -.7z" fill="#d8423a"/>
 <ellipse cx="26.500" cy="10" rx="3.600" ry="4.600" fill="#7a4a1e"/><ellipse cx="26.800" cy="9.500" rx="2" ry="2.800" fill="#e2a62c"/>
 <path d="M22 17.500 q4 3 9.500 6 v4 q-5 -2 -9.500 -9z" fill="#2a4a7a" opacity=".7"/>
 <ellipse cx="26.500" cy="29.500" rx="3.500" ry="2.600" fill="#6a431c"/><ellipse cx="26.800" cy="29.800" rx="1.800" ry="1.300" fill="#e8b84a"/>
 <path d="M12 3v2.200M12 6.800v2.200M12 10.600v2.200M12 14.400v2.200M12 18.200v2.200M12 22v2.200M12 25.800v2.200" stroke="#e6ecef" stroke-width="1.700"/>
 <path d="M33.200 5v2.200M33.200 9v2.200M33.200 13v2.200M33.200 17v2.200M33.200 21v2.200M33.200 25v2.200M33.200 29v2.200M33.200 33v2" stroke="#cfe0ea" stroke-width="1.500"/>
</svg>

<!-- status bar -->
<div class="t" style="transform:scaleX(1.0515);left:302.500px;top:713.500px;color:#1e2a4a">4 items</div>
<div class="a" style="left:351px;top:711px;width:1px;height:20px;background:#5b6475"></div>
<svg style="left:1130px;top:713px" width="16" height="14" viewBox="0 0 16 14">
 <rect x=".5" y=".5" width="4" height="12.500" fill="#fff" stroke="#8a8f9a" stroke-width=".9" rx="1"/>
 <path d="M.5 4.700h4M.5 8.800h4" stroke="#8a8f9a" stroke-width=".8"/>
 <rect x="2" y="2" width="1" height="1" fill="#333"/><rect x="2" y="6.200" width="1" height="1" fill="#333"/><rect x="2" y="10.300" width="1" height="1" fill="#333"/>
 <path d="M6.500 2.500h3.500M11 2.500h4M6.500 6.700h3.500M11 6.700h4M6.500 10.800h3.500M11 10.800h4" stroke="#555b66" stroke-width="1.100"/>
</svg>
<svg style="left:1153px;top:714px" width="15" height="13" viewBox="0 0 15 13">
 <rect x=".6" y=".6" width="13.400" height="11.400" fill="#fff" stroke="#6f7683" stroke-width="1" rx="1"/>
 <rect x="2.200" y="2.200" width="10.200" height="8.200" fill="#a9d6ec"/>
 <path d="M2.200 10.400v-5q3 2 5 2.500t5.200 0v2.500z" fill="#2e6670"/>
</svg>
<!-- desktop icon + watermark -->
<svg style="left:1366px;top:755px" width="48" height="52" viewBox="1366 755 48 52">
 <defs>
  <linearGradient id="rb1" x1="0" y1="0" x2="1" y2="0"><stop offset="0" stop-color="#b9c6d2"/><stop offset=".25" stop-color="#eef3f8"/><stop offset=".55" stop-color="#dbe4ee"/><stop offset=".8" stop-color="#f2f6fa"/><stop offset="1" stop-color="#aab6c4"/></linearGradient>
  <linearGradient id="rb2" x1="0" y1="0" x2="0" y2="1"><stop offset="0" stop-color="#fff" stop-opacity="0"/><stop offset=".8" stop-color="#8a96a4" stop-opacity=".25"/><stop offset="1" stop-color="#5f6a78" stop-opacity=".7"/></linearGradient>
 </defs>
 <ellipse cx="1394" cy="800" rx="14" ry="3.500" fill="#41525e" opacity=".3"/>
 <path d="M1372.500 762 L1378 798.500 Q1390 803.500 1402 798.500 L1407.500 762z" fill="url(#rb1)" stroke="#8b98a6" stroke-width=".8"/>
 <path d="M1372.500 762 L1378 798.500 Q1390 803.500 1402 798.500 L1407.500 762z" fill="url(#rb2)"/>
 <path d="M1376 770 l7 -6 l6 5 l7 -5 l8 6 l-3 9 l-6 -4 l-7 6 l-8 -5z" fill="#fff" opacity=".75"/>
 <path d="M1380 786 l6 4 l8 -5 l6 5 l-1 7 l-18 0z" fill="#eef3f8" opacity=".7"/>
 <ellipse cx="1390" cy="761.500" rx="17.600" ry="3.700" fill="#d9e1e9" stroke="#7f8b98" stroke-width="1.200"/>
 <ellipse cx="1390" cy="762" rx="14.500" ry="2.400" fill="#fbfdfe"/>
 <path d="M1382 775 q3 -5 7 -3 l-1.500 -2.500 l5 1.500 l-1.500 5 l-1.200 -2.300 q-3 -1 -4.500 3z M1380.500 780 l4 -2 l1.500 6 q1 3 4 3.500 l-.5 3 q-5 0 -7 -5z M1395 779 l3.500 2.500 q1.500 4 -2 7.500 l-4.500 1 l1 -3.500 q3.500 -1.500 2.500 -4.500z" fill="#2b6fe0"/>
 <path d="M1401 764 L1397.500 799" stroke="#fff" stroke-width="1.500" opacity=".6"/>
</svg>
<div class="t c" style="transform:scaleX(0.9768);left:1341.400px;top:807.500px;width:98px;color:#fff;text-shadow:0 1px 2px #000,0 0 3px #000,1px 1px 1px #000">Recycle Bin</div>
<div class="t" style="transform:scaleX(1.0280);left:1306px;top:841px;font-size:14px;line-height:16px;color:#fff;opacity:.62">.b32615d501a711d0</div>

<!-- taskbar -->
<div class="a" style="left:3px;top:860px;width:1440px;height:39px;background:linear-gradient(90deg,#1a82d8 0%,#1c8ade 22%,#1e96e6 50%,#2ca6ea 68%,#30a6e6 80%,#3aa0d8 87%,#3f98cc 91%,#3b8aba 100%)"></div>
<div class="a" style="left:3px;top:860px;width:1440px;height:1px;background:#0e3d63"></div>
<div class="a" style="left:3px;top:861px;width:1440px;height:1px;background:rgba(130,200,245,.7)"></div>
<div class="a" style="left:3px;top:862px;width:54px;height:37px;background:#343434"></div>
<!-- windows flag -->
<svg style="left:16px;top:866px" width="30" height="28" viewBox="16 866 30 28">
 <path d="M21.500 869.300 Q26.500 865.800 32.600 869.800 L30.600 878.800 Q25.500 875.300 19.300 878.300z" fill="#ee3a2c"/>
 <path d="M33.800 871 Q38.500 874 44.200 871.400 L41.800 880.300 Q36.500 883.300 31.700 879.800z" fill="#86c440"/>
 <path d="M18.900 880 Q24.500 876.800 30.200 880.600 L28 889.600 Q22.500 885.800 16.600 888.800z" fill="#2f9fe8"/>
 <path d="M31.300 881.800 Q36.500 885.300 41.400 882.300 L39.100 891.200 Q34 894.500 28.800 890.800z" fill="#fbb034"/>
</svg>
<!-- IE -->
<svg style="left:76px;top:862px" width="36" height="36" viewBox="76 862 36 36">
 <defs><linearGradient id="ieg" x1="0" y1="0" x2="0" y2="1"><stop offset="0" stop-color="#7fdcfa"/><stop offset=".55" stop-color="#3fb4ee"/><stop offset="1" stop-color="#2a90da"/></linearGradient></defs>
 <path d="M94.500 869.500 A12.300 12.300 0 1 0 106 886 H99.500 A6 6 0 0 1 89 883.700 H107 Q108.300 869.500 94.500 869.500z M89.200 879.200 A5.600 5.600 0 0 1 100.300 879.200z" fill="url(#ieg)" stroke="#1f86cc" stroke-width=".9"/>
 <path d="M79.500 893.500 Q74.500 887 85 875.500 Q95.500 865 103.500 864.300 Q108.500 864.300 105.800 871.200 Q106 866 101.300 867.200 Q94 869 86 878 Q78.500 887.500 81.500 892.500 Q81.500 894.500 79.500 893.500z" fill="#f4cf3c" stroke="#d8ae22" stroke-width="1.300" stroke-linejoin="round"/>
</svg>
<!-- active explorer button -->
<div class="a" style="left:125px;top:861px;width:58px;height:38px;border:1px solid #ddf0fc;border-radius:2px;background:linear-gradient(180deg,#b8dcf6 0%,#a2d0f2 45%,#8cc4ee 55%,#90c7ef 100%)"></div>
<svg style="left:137px;top:866px" width="34" height="31" viewBox="137 866 34 31">
 <path d="M139.500 869 q0 -1.500 1.500 -1.500h7.500l1.500 2h14.500q1.500 0 1.500 1.500v15h-26.500z" fill="#f3dd98" stroke="#d0b25a" stroke-width=".8"/>
 <rect x="141.500" y="868.200" width="3.600" height="2" rx=".5" fill="#3fa04a"/>
 <path d="M142.500 872.500 q0 -1.500 1.500 -1.500h7l1.500 2h13.500q1.500 0 1.500 1.500v14h-25z" fill="#f6e2a2" stroke="#d0b25a" stroke-width=".8"/>
 <rect x="149" y="870" width="3.600" height="2" rx=".5" fill="#d8503a"/>
 <path d="M138.500 875.500 q0 -1.500 1.500 -1.500h14.500l1.500 -2.200h12q1.500 0 1.500 1.500v17.700q0 1.500 -1.500 1.500h-28q-1.500 0 -1.500 -1.500z" fill="#fae8ab" stroke="#d3b660" stroke-width=".8"/>
 <rect x="158.500" y="872.700" width="3.600" height="2" rx=".5" fill="#3a8fd8"/>
 <path d="M142.300 895.500v-9.500q0 -2.500 2.500 -2.500h18.400q2.500 0 2.500 2.500v9.500h-6.500v-6.200h-10.400v6.200z" fill="#8fcdee" stroke="#4a9ac8" stroke-width=".9"/>
 <path d="M143.300 888v-2q0 -1.500 1.500 -1.500h18.400q1.500 0 1.500 1.500v2z" fill="#c9e9f8" opacity=".8"/>
</svg>
<!-- watermark -->
<svg style="left:1140px;top:836px" width="290" height="66" viewBox="1140 836 290 66">
 <g opacity=".62">
  <rect x="1151" y="845" width="44" height="44" rx="8" fill="#4a98e2" stroke="#2c6cb4" stroke-width="3.500" transform="rotate(13 1173 867)"/>
  <path d="M1162 857 q11 5 22 21 M1185 855 q-13 9 -23 25" stroke="#c4e2fa" stroke-width="4.500" fill="none" stroke-linecap="round" transform="rotate(10 1173 867)"/>
  <text x="1201" y="879" font-family="Liberation Sans, sans-serif" font-weight="bold" font-size="26" fill="#58a6ea" stroke="#2a68b4" stroke-width="1.600" paint-order="stroke" textLength="212" lengthAdjust="spacingAndGlyphs">xtremehardware.it</text>
 </g>
</svg>
<!-- tray -->
<svg style="left:1288px;top:868px" width="16" height="22" viewBox="0 0 16 22"><rect x="1" y="1" width="4" height="5" fill="#cfd6dc"/><rect x="0" y="6" width="6" height="10" rx="1" fill="#5b6670"/><path d="M3 16v5" stroke="#444c55" stroke-width="1.500"/><circle cx="10" cy="15" r="5" fill="#2fae3a" stroke="#1a7a22"/><path d="M7.500 15l2 2l3.500 -4" stroke="#fff" stroke-width="1.600" fill="none"/></svg>
<svg style="left:1311px;top:871px" width="18" height="17" viewBox="0 0 18 17"><rect x="5" y="3" width="11" height="8" fill="none" stroke="#fff" stroke-width="1.300"/><path d="M8 14.500h6M11 11v3.500M2.500 1v6M.8 2.500h3.500M2.500 7h3" stroke="#fff" stroke-width="1.300" fill="none"/></svg>
<svg style="left:1333px;top:871px" width="18" height="17" viewBox="0 0 18 17"><path d="M1.500 6h3l4 -4v13l-4 -4h-3z" fill="#f2f6f9" stroke="#b8c4cc" stroke-width=".6"/><path d="M10.500 5.500q2 3 0 6M12.500 3.500q3.500 5 0 10" stroke="#fff" stroke-width="1.100" fill="none"/></svg>
<div class="t" style="transform:scaleX(0.9814);left:1368.300px;top:865px;color:#fff">12:56 PM</div>
<div class="t" style="transform:scaleX(1.0253);left:1366.400px;top:882.300px;color:#fff">9/24/2011</div>
<div class="a" style="left:1429px;top:861px;width:13px;height:38px;border:1px solid #9fd3f2;background:linear-gradient(180deg,#73a9c9 0%,#4588b3 45%,#34789f 100%)"></div>
</body>
</html>
